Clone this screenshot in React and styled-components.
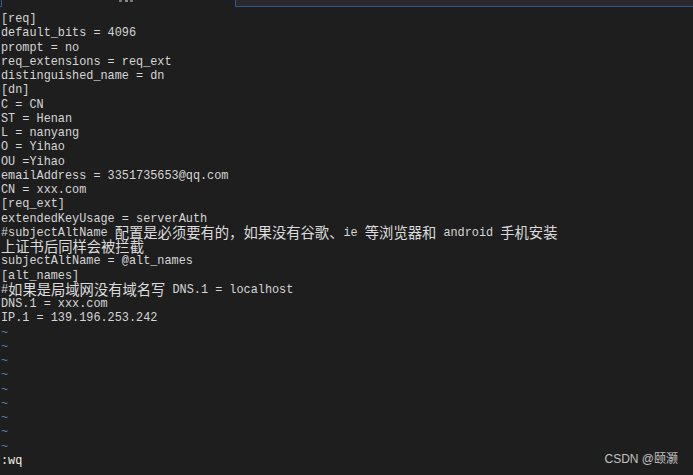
import React from "react";
import styled, { createGlobalStyle } from "styled-components";

const Global = createGlobalStyle`
  html, body {
    margin: 0;
    padding: 0;
    background: #1e1e1e;
  }
  #root {
    height: 475px;
  }
`;

const Screen = styled.div`
  position: relative;
  width: 693px;
  height: 475px;
  overflow: hidden;
  background: #1e1e1e;
  display: flex;
  flex-direction: column;
`;

const TabStrip = styled.div`
  height: 7px;
  display: flex;
  align-items: flex-end;
  flex-shrink: 0;
`;

const TabLeft = styled.div`
  width: 2px;
  height: 100%;
  border-right: 1px solid #2c5a8c;
  border-bottom: 1px solid #2c5a8c;
  box-sizing: border-box;
`;

const TabTitle = styled.div`
  width: 233px;
  height: 100%;
  position: relative;
  overflow: hidden;
  &::after {
    content: "";
    position: absolute;
    left: 117px;
    top: 0;
    width: 16px;
    height: 2px;
    background: linear-gradient(90deg, #777 0 3px, transparent 3px 6px, #888 6px 9px, transparent 9px 11px, #777 11px 14px, transparent 14px);
  }
`;

const TabRight = styled.div`
  flex: 1;
  height: 100%;
  background: #2a282c;
  border-left: 1px solid #2c5a8c;
  border-bottom: 1px solid #2c5a8c;
  box-sizing: border-box;
`;

const Editor = styled.div`
  padding: 5px 0 0 1px;
  font-family: "Liberation Mono", "Noto Sans CJK SC", monospace;
  font-size: 11.85px;
  line-height: 14.25px;
  color: #d6d6d6;
  white-space: pre;
`;

const Line = styled.div`
  height: 14.25px;
  color: ${(p) => (p.$tilde ? "#5b7fb5" : "#d6d6d6")};
`;

const Cjk = styled.span`
  display: inline-block;
  height: 14.25px;
  line-height: 12.5px;
  vertical-align: top;
  font-family: "Noto Sans CJK SC", sans-serif;
  font-size: 14.3px;
  color: #dcdcdc;
`;

const Command = styled.div`
  height: 14.25px;
  color: #e8e8e8;
  span {
    color: #f4f1e2;
  }
`;

const Watermark = styled.div`
  position: absolute;
  right: 15px;
  bottom: 9px;
  font-family: "Liberation Sans", "Noto Sans CJK SC", sans-serif;
  font-size: 12px;
  color: #c2c2c2;
`;

const lines = [
  "[req]",
  "default_bits = 4096",
  "prompt = no",
  "req_extensions = req_ext",
  "distinguished_name = dn",
  "[dn]",
  "C = CN",
  "ST = Henan",
  "L = nanyang",
  "O = Yihao",
  "OU =Yihao",
  "emailAddress = 3351735653@qq.com",
  "CN = xxx.com",
  "[req_ext]",
  "extendedKeyUsage = serverAuth",
  "#subjectAltName 配置是必须要有的，如果没有谷歌、ie 等浏览器和 android 手机安装",
  "上证书后同样会被拦截",
  "subjectAltName = @alt_names",
  "[alt_names]",
  "#如果是局域网没有域名写 DNS.1 = localhost",
  "DNS.1 = xxx.com",
  "IP.1 = 139.196.253.242",
];

// split a line into ascii and CJK runs so the CJK can be sized on its own
const renderText = (text) => {
  const parts = text.split(/([\u3000-\u9fff\uff00-\uffef]+)/);
  return parts.map((part, i) =>
    /[\u3000-\u9fff\uff00-\uffef]/.test(part) ? (
      <Cjk key={i}>{part}</Cjk>
    ) : (
      part
    )
  );
};

const App = () => {
  return (
    <>
      <Global />
      <Screen>
        <TabStrip>
          <TabLeft />
          <TabTitle />
          <TabRight />
        </TabStrip>
        <Editor>
          {lines.map((l, i) => (
            <Line key={i}>{renderText(l)}</Line>
          ))}
          {Array.from({ length: 9 }).map((_, i) => (
            <Line key={"t" + i} $tilde>
              ~
            </Line>
          ))}
          <Command>
            :<span>wq</span>
          </Command>
        </Editor>
        <Watermark>CSDN @颐灏</Watermark>
      </Screen>
    </>
  );
};

export default App;
